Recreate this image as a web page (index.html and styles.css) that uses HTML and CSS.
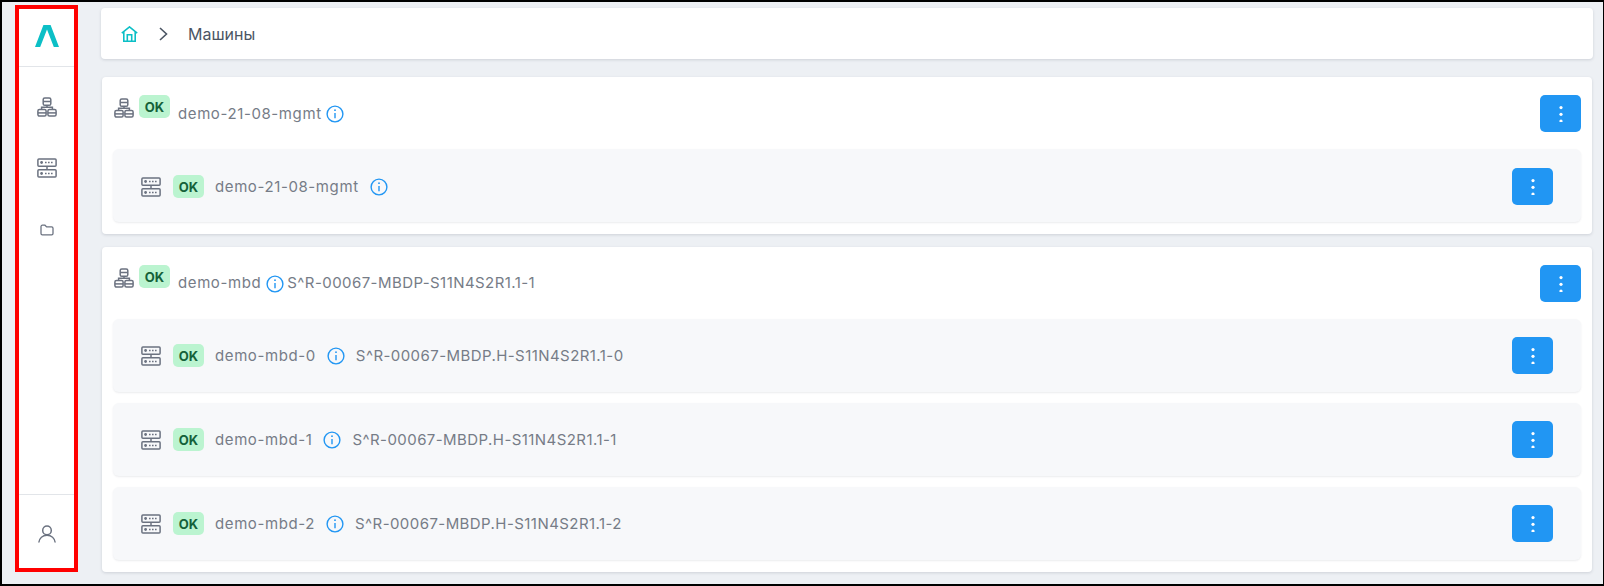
FILE: index.html
```html
<!DOCTYPE html>
<html lang="en">
<head>
  <meta charset="UTF-8">
  <title>Машины</title>
  <link rel="stylesheet" href="styles.css">
</head>
<body>

<svg class="defs" width="0" height="0">
  <symbol id="cluster" viewBox="0 0 20 20">
    <rect x="6.200" y="0.900" width="7.600" height="7.400" rx="1.600"/>
    <path d="M6.200 4.600h7.600M10 8.300v2M4.600 12.600v-2.300h10.800v2.300"/>
    <rect x="0.900" y="12.600" width="8.200" height="6.500" rx="1.500"/>
    <path d="M0.900 15.900h8.200"/>
    <rect x="10.900" y="12.600" width="8.200" height="6.500" rx="1.500"/>
    <path d="M10.900 15.900h8.200"/>
  </symbol>
  <symbol id="server" viewBox="0 0 20 20">
    <rect x="0.900" y="0.900" width="18.200" height="7.300" rx="1"/>
    <rect x="0.900" y="11.800" width="18.200" height="7.300" rx="1"/>
    <path d="M10 8.200v3.600"/>
    <circle class="fill" cx="4.600" cy="4.500" r="1.400"/>
    <circle class="fill" cx="4.600" cy="15.500" r="1.400"/>
    <path class="dots" d="M8 4.500h8.500M8 15.500h8.500"/>
  </symbol>
  <symbol id="info" viewBox="0 0 18 18">
    <circle cx="9" cy="9" r="7.900"/>
    <path d="M9 8v5.200"/>
    <circle class="fill" cx="9" cy="5.200" r="0.900"/>
  </symbol>
  <symbol id="more" viewBox="0 0 4 16">
    <circle cx="2" cy="1.600" r="1.600"/>
    <circle cx="2" cy="8.300" r="1.600"/>
    <circle cx="2" cy="15" r="1.600"/>
  </symbol>
</svg>

<div class="page">
  <aside class="sidebar">
    <div class="logo">
      <svg width="24" height="22" viewBox="0 0 24 22"><path d="M0 22L8.400 0h7.200L24 22h-5.200L12 4.600 5.200 22z"/></svg>
    </div>
    <nav class="nav">
      <svg class="icon"><use href="#cluster"/></svg>
      <svg class="icon"><use href="#server"/></svg>
      <svg class="icon-small" viewBox="0 0 16 14"><path d="M1 3a1.600 1.600 0 0 1 1.600-1.600h3l2 2h5.800a1.600 1.600 0 0 1 1.600 1.600v6a1.600 1.600 0 0 1-1.600 1.600H2.600A1.600 1.600 0 0 1 1 11z"/></svg>
    </nav>
    <div class="user">
      <svg width="18" height="18" viewBox="0 0 18 18"><circle cx="9" cy="5.400" r="4.300"/><path d="M0.800 17.500c.6-4.300 3.800-7.300 8.200-7.300s7.600 3 8.200 7.300"/></svg>
    </div>
  </aside>

  <main class="content">
    <div class="breadcrumb">
      <svg class="home" width="17" height="16" viewBox="0 0 17 16"><path d="M.8 7.200L8.500.9l7.700 6.300M2.800 6v9.200h11.400V6M6.300 15.200V8.800h4.400v6.400"/></svg>
      <svg class="chevron" width="9" height="14" viewBox="0 0 9 14"><path d="M1 1l6.500 6L1 13"/></svg>
      <span>Машины</span>
    </div>

    <section class="group group-one">
      <div class="group-head">
        <svg class="icon"><use href="#cluster"/></svg>
        <span class="badge">OK</span>
        <span class="name">demo-21-08-mgmt</span>
        <svg class="info"><use href="#info"/></svg>
        <button class="more"><svg><use href="#more"/></svg></button>
      </div>
      <div class="row">
        <svg class="icon"><use href="#server"/></svg>
        <span class="badge">OK</span>
        <span class="name">demo-21-08-mgmt</span>
        <svg class="info"><use href="#info"/></svg>
        <button class="more"><svg><use href="#more"/></svg></button>
      </div>
    </section>

    <section class="group group-two">
      <div class="group-head">
        <svg class="icon"><use href="#cluster"/></svg>
        <span class="badge">OK</span>
        <span class="name">demo-mbd</span>
        <svg class="info"><use href="#info"/></svg>
        <span class="serial">S^R-00067-MBDP-S11N4S2R1.1-1</span>
        <button class="more"><svg><use href="#more"/></svg></button>
      </div>
      <div class="row">
        <svg class="icon"><use href="#server"/></svg>
        <span class="badge">OK</span>
        <span class="name">demo-mbd-0</span>
        <svg class="info"><use href="#info"/></svg>
        <span class="serial">S^R-00067-MBDP.H-S11N4S2R1.1-0</span>
        <button class="more"><svg><use href="#more"/></svg></button>
      </div>
      <div class="row">
        <svg class="icon"><use href="#server"/></svg>
        <span class="badge">OK</span>
        <span class="name">demo-mbd-1</span>
        <svg class="info"><use href="#info"/></svg>
        <span class="serial">S^R-00067-MBDP.H-S11N4S2R1.1-1</span>
        <button class="more"><svg><use href="#more"/></svg></button>
      </div>
      <div class="row">
        <svg class="icon"><use href="#server"/></svg>
        <span class="badge">OK</span>
        <span class="name">demo-mbd-2</span>
        <svg class="info"><use href="#info"/></svg>
        <span class="serial">S^R-00067-MBDP.H-S11N4S2R1.1-2</span>
        <button class="more"><svg><use href="#more"/></svg></button>
      </div>
    </section>
  </main>
</div>

</body>
</html>
```

FILE: styles.css
```css
html, body {
  margin: 0;
  height: 100%;
}

body {
  font-family: Inter, "Noto Sans", sans-serif;
  color: #767c87;
  overflow: hidden;
}

.defs {
  position: absolute;
}

symbol {
  fill: none;
  stroke: #6b7280;
  stroke-width: 1.5;
}

symbol .fill {
  fill: #6b7280;
  stroke: none;
}

symbol .dots {
  stroke-dasharray: 1.6 1.4;
}

.page {
  box-sizing: border-box;
  width: 1604px;
  height: 586px;
  display: flex;
  align-items: flex-start;
  padding: 1px 10px 0 13px;
  background: #edf0f4;
  border: 2px solid #000;
  border-right-width: 1px;
}

/* sidebar, the red frame is part of the screenshot */
.sidebar {
  box-sizing: border-box;
  width: 63px;
  height: 567px;
  margin-top: 2px;
  flex: none;
  display: flex;
  flex-direction: column;
  background: #fff;
  border: 4px solid #f00;
}

.logo {
  height: 57px;
  flex: none;
  display: flex;
  align-items: center;
  justify-content: center;
  border-bottom: 1px solid #e2e5e9;
}

.logo svg {
  margin-top: -3px;
  fill: #0cbfc6;
}

.nav {
  flex: 1;
  display: flex;
  flex-direction: column;
  align-items: center;
  padding-top: 30px;
}

.nav .icon {
  margin-bottom: 41px;
}

.icon {
  width: 20px;
  height: 20px;
  flex: none;
}

.icon-small {
  width: 14px;
  height: 12px;
  margin-top: 5px;
  fill: none;
  stroke: #6b7280;
  stroke-width: 1.5;
}

.user {
  height: 69px;
  padding-top: 4px;
  flex: none;
  display: flex;
  align-items: center;
  justify-content: center;
  border-top: 1px solid #e2e5e9;
}

.user svg {
  fill: none;
  stroke: #6b7280;
  stroke-width: 1.5;
}

.content {
  flex: 1;
  min-width: 0;
  margin-left: 23px;
  display: flex;
  flex-direction: column;
  padding-top: 5px;
}

.breadcrumb {
  height: 51px;
  flex: none;
  display: flex;
  align-items: center;
  padding-left: 20px;
  background: #fff;
  border-radius: 4px;
  box-shadow: 0 1px 3px rgba(60, 70, 90, .18);
  font-size: 16px;
  color: #4b5563;
}

.home {
  fill: none;
  stroke: #0cbfc6;
  stroke-width: 1.6;
}

.chevron {
  margin: 0 20px 0 21px;
  fill: none;
  stroke: #4b5563;
  stroke-width: 1.6;
}

.group {
  margin: 18px 1px 0;
  padding: 0 11px 12px;
  background: #fff;
  border-radius: 4px;
  box-shadow: 0 1px 3px rgba(60, 70, 90, .18);
}

.group-one {
  height: 157px;
  box-sizing: border-box;
}

.group + .group {
  margin-top: 13px;
}

.name {
  letter-spacing: .6px;
}

.serial {
  letter-spacing: .43px;
}

.group-head {
  height: 72px;
  display: flex;
  align-items: flex-start;
  padding-left: 1px;
  font-size: 15px;
}

.group-head .icon {
  margin: 21px 5px 0 0;
}

.group-head .badge {
  margin: 18px 8px 0 0;
}

.group-head .name {
  margin: 27px 4px 0 0;
}

.group-head .info {
  margin: 28px 3px 0 0;
}

.group-head .serial {
  margin: 26px 0 0 0;
}

.group-head .more {
  margin-top: 18px;
}

.group-two .group-head .name {
  margin: 26px 5px 0 0;
}

.row {
  height: 73px;
  box-sizing: border-box;
  display: flex;
  align-items: center;
  padding: 0 28px;
  background: #f7f8fa;
  border-radius: 6px;
  box-shadow: 0 1px 2px rgba(60, 70, 90, .1);
  font-size: 15px;
}

.group-one .row {
  padding-top: 2px;
}

.row + .row {
  margin-top: 11px;
}

.row .icon {
  margin-right: 12px;
}

.row .badge {
  margin-right: 11px;
}

.row .info {
  margin: 0 11px 0 11px;
}

.badge {
  box-sizing: border-box;
  width: 31px;
  height: 23px;
  flex: none;
  display: flex;
  align-items: center;
  justify-content: center;
  background: #bbf4d0;
  border-radius: 5px;
  color: #14613a;
  font-size: 13px;
  font-weight: 700;
}

.info {
  width: 18px;
  height: 18px;
  flex: none;
}

#info {
  stroke: #2196f3;
  fill: none;
  stroke-width: 1.4;
}

#info .fill {
  fill: #2196f3;
}

.more {
  width: 41px;
  height: 37px;
  margin-left: auto;
  padding: 0;
  flex: none;
  display: flex;
  align-items: center;
  justify-content: center;
  background: #2196f3;
  border: 0;
  border-radius: 5px;
}

.more svg {
  width: 4px;
  height: 16px;
}

#more {
  fill: #fff;
  stroke: none;
}
```
